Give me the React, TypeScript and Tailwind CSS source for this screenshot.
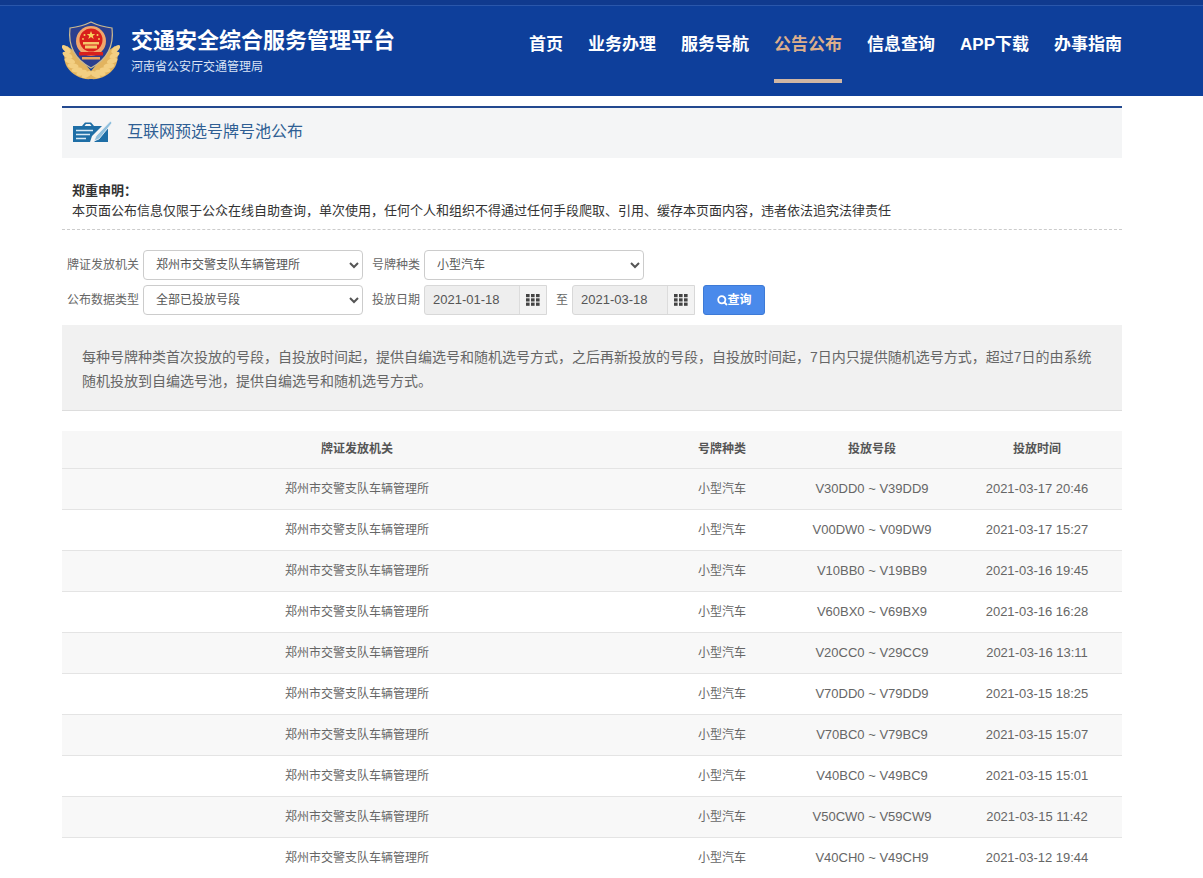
const rows = [
  ["V30DD0 ~ V39DD9", "2021-03-17 20:46"],
  ["V00DW0 ~ V09DW9", "2021-03-17 15:27"],
  ["V10BB0 ~ V19BB9", "2021-03-16 19:45"],
  ["V60BX0 ~ V69BX9", "2021-03-16 16:28"],
  ["V20CC0 ~ V29CC9", "2021-03-16 13:11"],
  ["V70DD0 ~ V79DD9", "2021-03-15 18:25"],
  ["V70BC0 ~ V79BC9", "2021-03-15 15:07"],
  ["V40BC0 ~ V49BC9", "2021-03-15 15:01"],
  ["V50CW0 ~ V59CW9", "2021-03-15 11:42"],
  ["V40CH0 ~ V49CH9", "2021-03-12 19:44"],
];

const nav = ["首页", "业务办理", "服务导航", "公告公布", "信息查询", "APP下载", "办事指南"];

const leafAngles = [172, 160, 148, 136, 124, 112, 100];

function Emblem() {
  return (
    <svg width="58" height="60" viewBox="0 0 58 60" className="shrink-0">
      <path d="M29 58 C20 59 10 54 5 46 C1 39 2 31 5 25 L12 30 L29 50 L46 30 L53 25 C56 31 57 39 53 46 C48 54 38 59 29 58Z" fill="#e2b45f" />
      {leafAngles.map((a) => {
        const r = (a * Math.PI) / 180;
        const x = 29 + 25 * Math.cos(r);
        const y = 24 + 30 * Math.sin(r);
        return (
          <g key={a}>
            <ellipse cx={x} cy={y} rx="5.5" ry="2.6" fill="#f3cf82" transform={`rotate(${a - 130} ${x} ${y})`} />
            <ellipse cx={58 - x} cy={y} rx="5.5" ry="2.6" fill="#f3cf82" transform={`rotate(${130 - a} ${58 - x} ${y})`} />
          </g>
        );
      })}
      <path d="M29 1 C23 4 16 6 8 7 C6 24 12 38 29 47 C46 38 52 24 50 7 C42 6 35 4 29 1Z" fill="#2b3f8e" stroke="#cdbb90" strokeWidth="1.2" />
      <circle cx="29" cy="20" r="15" fill="#f3a66b" />
      <circle cx="29" cy="19" r="11.5" fill="#d8201c" />
      <path d="M29 10l1.2 3h3l-2.4 1.9.9 3-2.7-1.8-2.7 1.8.9-3-2.4-1.9h3z" fill="#f7d25c" />
      <circle cx="22.5" cy="14" r="1" fill="#f7d25c" />
      <circle cx="35.5" cy="14" r="1" fill="#f7d25c" />
      <circle cx="21" cy="18" r="0.9" fill="#f7d25c" />
      <circle cx="37" cy="18" r="0.9" fill="#f7d25c" />
      <path d="M21 21h16v2.5H21zM23 24.5h12v3H23z" fill="#f5c66a" />
      <path d="M17 31h24v3.5H17z" fill="#d8201c" />
      <path d="M20 36h18v2.5H20z" fill="#e9a45f" />
    </svg>
  );
}

function NoteIcon() {
  return (
    <svg width="40" height="24" viewBox="0 0 40 24">
      <path d="M1 6h9l3-3.5h6L22 6h8L20 16l-2 6H1z" fill="#1e6ea6" />
      <path d="M4 10.5h17M4 14.5h14M4 18.5h10" stroke="#d9eaf5" strokeWidth="1.4" />
      <path d="M12.5 6l1.5-2h4l1.5 2z" fill="#f4f5f6" />
      <path d="M36 8v14H22z" fill="#1e6ea6" />
      <path d="M38.5 1 24 16l-2 5 5-2L40 3z" fill="#8fbfdd" stroke="#f4f5f6" strokeWidth="0.8" />
    </svg>
  );
}

function GridIcon() {
  return (
    <svg width="14" height="12" viewBox="0 0 14 12" fill="#444">
      {[0, 5, 10].map((x) =>
        [0, 4.3, 8.6].map((y) => <rect key={`${x}-${y}`} x={x} y={y} width="3.6" height="3.2" />)
      )}
    </svg>
  );
}

function DateBox({ value }: { value: string }) {
  return (
    <div className="flex h-[30px] w-[123px] border border-[#d8d8d8] bg-[#eeeeee] rounded-l-[3px]">
      <span className="flex-1 pl-2 text-[13px] leading-[28px] text-[#555]">{value}</span>
      <span className="flex w-[27px] items-center justify-center border-l border-[#dcdcdc] bg-[#f3f3f3]">
        <GridIcon />
      </span>
    </div>
  );
}

const selectCls =
  "h-[30px] rounded-[4px] border border-[#cccccc] bg-white pl-2 text-[12px] text-[#555] outline-none";
const labelCls = "text-[12px] text-[#666] whitespace-nowrap";

export default function App() {
  return (
    <div
      className="h-[878px] overflow-hidden bg-white"
      style={{ fontFamily: '"Liberation Sans", "Noto Sans CJK SC", sans-serif' }}
    >
      <header className="h-[96px] bg-[#0e3f9b] border-t-[5px] border-[#103a8e]">
        <div className="border-t border-[#2a57ab] h-full">
          <div className="ml-[62px] flex h-[90px] w-[1060px] items-center justify-between">
            <div className="flex items-center gap-[11px]">
              <Emblem />
              <div className="text-white">
                <div className="text-[22px] font-bold leading-[30px]">交通安全综合服务管理平台</div>
                <div className="text-[12px] leading-[18px] text-[#dbe4f5] mt-[2px]">河南省公安厅交通管理局</div>
              </div>
            </div>
            <nav className="flex gap-[25px] h-full">
              {nav.map((n, i) => (
                <div
                  key={n}
                  className={`relative flex items-center pb-[12px] text-[17px] font-bold ${i === 3 ? "text-[#dcae8b]" : "text-white"}`}
                >
                  {n}
                  {i === 3 && <span className="absolute left-0 right-0 bottom-[13px] h-[4px] bg-[#d0b6a4]" />}
                </div>
              ))}
            </nav>
          </div>
        </div>
      </header>

      <main className="ml-[62px] w-[1060px] pt-[10px]">
        <div className="flex h-[52px] items-center gap-[15px] border-t-2 border-[#23498f] bg-[#f4f5f6] pb-[3px] pl-[10px]">
          <NoteIcon />
          <h1 className="text-[16px] text-[#2f5f94]">互联网预选号牌号池公布</h1>
        </div>

        <div className="h-[72px] border-b border-dashed border-[#cccccc] pl-[10px] pt-[23px] text-[13px] text-[#333]">
          <div className="font-bold leading-[19px]">郑重申明：</div>
          <div className="leading-[22px]">
            本页面公布信息仅限于公众在线自助查询，单次使用，任何个人和组织不得通过任何手段爬取、引用、缓存本页面内容，违者依法追究法律责任
          </div>
        </div>

        <div className="pl-[5px] pt-[20px] flex flex-col gap-[5px]">
          <div className="flex items-center">
            <span className={`${labelCls} w-[76px]`}>牌证发放机关</span>
            <select className={`${selectCls} w-[220px]`}>
              <option>郑州市交警支队车辆管理所</option>
            </select>
            <span className={`${labelCls} ml-[9px] w-[52px]`}>号牌种类</span>
            <select className={`${selectCls} w-[220px]`}>
              <option>小型汽车</option>
            </select>
          </div>
          <div className="flex items-center">
            <span className={`${labelCls} w-[76px]`}>公布数据类型</span>
            <select className={`${selectCls} w-[220px]`}>
              <option>全部已投放号段</option>
            </select>
            <span className={`${labelCls} ml-[9px] w-[52px]`}>投放日期</span>
            <DateBox value="2021-01-18" />
            <span className={`${labelCls} ml-[9px] mr-[4px]`}>至</span>
            <DateBox value="2021-03-18" />
            <button className="ml-[8px] flex h-[30px] w-[62px] items-center justify-center rounded-[3px] border border-[#3d7ad6] bg-[#4a8aeb] text-[12px] font-bold text-white">
              <svg width="11" height="11" viewBox="0 0 11 11" fill="none" stroke="white" strokeWidth="1.8">
                <circle cx="4.8" cy="4.8" r="3.6" />
                <path d="M7.5 7.5 10 10" />
              </svg>
              查询
            </button>
          </div>
        </div>

        <div className="mt-[10px] h-[86px] border-b border-[#dddddd] bg-[#f1f1f1] px-[20px] pt-[20px] text-[14px] leading-[24px] text-[#666]">
          每种号牌种类首次投放的号段，自投放时间起，提供自编选号和随机选号方式，之后再新投放的号段，自投放时间起，7日内只提供随机选号方式，超过7日的由系统随机投放到自编选号池，提供自编选号和随机选号方式。
        </div>

        <table className="mt-[20px] w-full table-fixed border-collapse text-center text-[12px] text-[#666]">
          <colgroup>
            <col className="w-[590px]" />
            <col className="w-[140px]" />
            <col className="w-[160px]" />
            <col className="w-[170px]" />
          </colgroup>
          <thead>
            <tr className="h-[37px] border-b border-[#e4e4e4] bg-[#f7f7f7] text-[#555]">
              <th className="font-bold">牌证发放机关</th>
              <th className="font-bold">号牌种类</th>
              <th className="font-bold">投放号段</th>
              <th className="font-bold">投放时间</th>
            </tr>
          </thead>
          <tbody>
            {rows.map((r, i) => (
              <tr key={r[0]} className={`h-[41px] border-b border-[#e4e4e4] ${i % 2 === 0 ? "bg-[#f8f8f8]" : "bg-white"}`}>
                <td>郑州市交警支队车辆管理所</td>
                <td>小型汽车</td>
                <td className="text-[13px]">{r[0]}</td>
                <td className="text-[13px]">{r[1]}</td>
              </tr>
            ))}
          </tbody>
        </table>
      </main>
    </div>
  );
}
